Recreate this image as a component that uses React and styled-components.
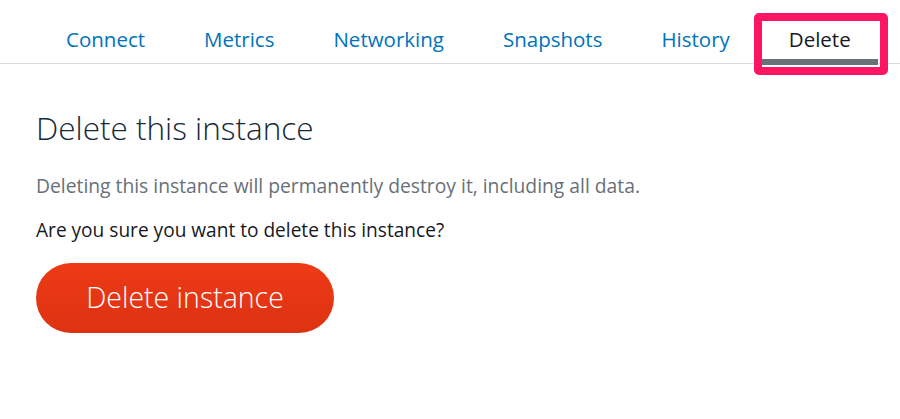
import React from "react";
import styled, { createGlobalStyle } from "styled-components";

const Global = createGlobalStyle`
  html, body { margin: 0; padding: 0; background: #ffffff; }
  body { font-family: "Open Sans", "Noto Sans", sans-serif; }
`;

const Page = styled.div`
  width: 900px;
  height: 419px;
  background: #ffffff;
  overflow: hidden;
`;

const TabBar = styled.nav`
  display: flex;
  gap: 5px;
  padding: 21px 0 0 39px;
  border-bottom: 1px solid #d9dcdc;
`;

const Tab = styled.div`
  position: relative;
  box-sizing: border-box;
  height: 44px;
  margin-bottom: -2px;
  padding: 6px 27px 0;
  font-size: 20.5px;
  line-height: 24px;
  color: ${(p) => (p.$active ? "#16191f" : "#0073bb")};
  border-bottom: 6px solid ${(p) => (p.$active ? "#687078" : "transparent")};
  white-space: nowrap;
`;

const Highlight = styled.span`
  position: absolute;
  top: -8px;
  left: -8px;
  right: -10px;
  bottom: -16px;
  border: 8px solid #fb1563;
  border-radius: 5px;
  pointer-events: none;
`;

const Content = styled.main`
  display: flex;
  flex-direction: column;
  align-items: flex-start;
  padding: 46px 0 0 36px;
`;

const Title = styled.h1`
  margin: 0;
  font-size: 31.5px;
  line-height: 36px;
  font-weight: 300;
  color: #152939;
`;

const Text = styled.p`
  margin: ${(p) => p.$mt}px 0 0;
  font-size: ${(p) => (p.$muted ? 19.3 : 19.1)}px;
  line-height: 24px;
  color: ${(p) => (p.$muted ? "#687078" : "#16191f")};
`;

const DangerButton = styled.button`
  margin-top: 21px;
  width: 298px;
  height: 70px;
  border: none;
  border-radius: 35px;
  background: linear-gradient(#ee3a17, #dd3212);
  color: #ffffff;
  font-family: inherit;
  font-size: 28.5px;
  font-weight: 300;
  display: flex;
  align-items: center;
  justify-content: center;
  padding: 0 0 2px;
  cursor: pointer;
`;

const tabs = ["Connect", "Metrics", "Networking", "Snapshots", "History", "Delete"];

export default function App() {
  return (
    <Page>
      <Global />
      <TabBar>
        {tabs.map((t) => (
          <Tab key={t} $active={t === "Delete"}>
            {t}
            {t === "Delete" && <Highlight />}
          </Tab>
        ))}
      </TabBar>
      <Content>
        <Title>Delete this instance</Title>
        <Text $muted $mt={28}>
          Deleting this instance will permanently destroy it, including all data.
        </Text>
        <Text $mt={20}>Are you sure you want to delete this instance?</Text>
        <DangerButton>Delete instance</DangerButton>
      </Content>
    </Page>
  );
}
